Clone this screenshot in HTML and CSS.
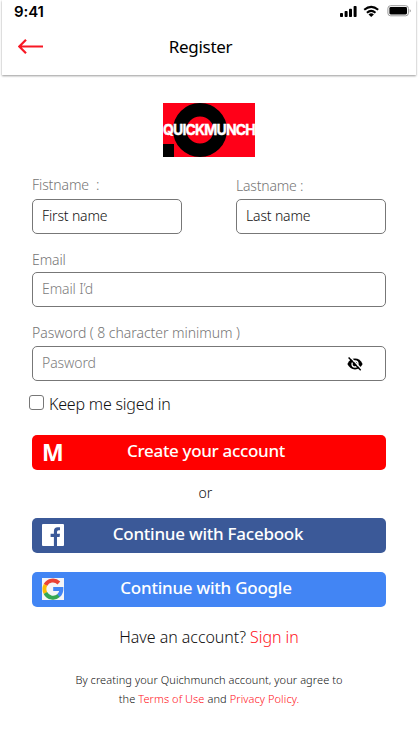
FILE: index.html
```html
<!DOCTYPE html>
<html lang="en">
<head>
<meta charset="utf-8">
<meta name="viewport" content="width=device-width">
<title>Register</title>
<link rel="stylesheet" href="styles.css">
</head>
<body>
<header class="header">
  <div class="status">
    <span class="time">9:41</span>
    <svg class="indicators" width="73" height="14" viewBox="0 0 73 14" aria-hidden="true">
      <rect x="1" y="8" width="3" height="4" rx=".8"/>
      <rect x="5.6" y="6" width="3" height="6" rx=".8"/>
      <rect x="10" y="3.7" width="3" height="8.3" rx=".8"/>
      <rect x="14.6" y="1" width="3" height="11" rx=".8"/>
      <g fill="none" stroke="#000" stroke-width="2"><path d="M25.2 4.8Q32.2-1 39.2 4.8M27.9 7.8Q32.2 4 36.5 7.8"/></g>
      <path d="M29.5 9.4Q32.2 7.3 34.9 9.4L32.2 12Z"/>
      <rect x="48.9" y=".7" width="20.5" height="10.1" rx="2.7" fill="none" stroke="#999"/>
      <rect x="50.4" y="2.1" width="17.6" height="7.3" rx="1.3"/>
      <path d="M70.7 4Q73 5.8 70.7 7.6Z" fill="#999"/>
    </svg>
  </div>
  <div class="nav">
    <svg width="26" height="16" viewBox="0 0 26 16" fill="none" stroke="#f81824" stroke-width="2.2" aria-label="Back"><path d="M25 7.5H1.5M8 .8L1.3 7.5L8 14.2"/></svg>
    <h1 class="title">Register</h1>
  </div>
</header>
<main class="main">
  <svg class="logo" width="92" height="54" viewBox="0 0 92 54" role="img" aria-label="Quickmunch">
    <path fill="#ff0018" d="M0 0H92V54H0Z"/>
    <circle cx="37" cy="27" r="20.3" fill="none" stroke="#000" stroke-width="13.4"/>
    <path d="M0 41H11V54H0Z"/>
    <text x="0" y="32.2" textLength="92" lengthAdjust="spacingAndGlyphs" class="wordmark">QUICKMUNCH</text>
  </svg>
  <form class="form">
    <div class="names">
      <div class="field"><label class="label first-label" for="first">Fistname&nbsp; :</label><input class="input dark first" id="first" value="First name"></div>
      <div class="field"><label class="label last-label" for="last">Lastname :</label><input class="input dark last" id="last" value="Last name"></div>
    </div>
    <div class="field"><label class="label email-label" for="email">Email</label><input class="input email" id="email" placeholder="Email I’d"></div>
    <div class="field"><label class="label pass-label" for="pass">Pasword ( 8 character minimum )</label>
      <div class="input password"><input class="bare" id="pass" placeholder="Pasword">
        <svg width="16" height="14" viewBox="0 0 16 14" aria-hidden="true"><path d="M.4 7Q3 1.6 8 1.6T15.6 7Q13 12.4 8 12.4T.4 7Z"/><circle cx="8" cy="7" r="3" fill="none" stroke="#fff" stroke-width="1.3"/><path d="M2.9-.2L14.8 12.2" stroke="#fff" stroke-width="1.4"/><path d="M1.6.6L13.7 13.3" stroke="#000" stroke-width="1.4"/></svg>
      </div>
    </div>
    <label class="remember"><input class="check" type="checkbox"><span>Keep me siged in</span></label>
    <button type="button" class="button create"><span class="mark m">M</span><span class="caption create-text">Create your account</span></button>
    <p class="or">or</p>
    <button type="button" class="button facebook">
      <svg class="mark" width="22" height="22" viewBox="0 0 22 22" aria-hidden="true"><rect width="22" height="22" rx="1" fill="#fff"/><path fill="#3b5998" d="M11.9 22V13H8.6V9.7H11.9V7.3Q11.9 3.3 15.7 3.3H18V6.3H16.6Q15 6.3 15 8V9.7H18L17.6 13H15V22Z"/></svg>
      <span class="caption facebook-text">Continue with Facebook</span></button>
    <button type="button" class="button google">
      <svg class="mark" width="22" height="22" viewBox="0 0 22 22" aria-hidden="true"><path fill="#f4f5f7" d="M0 0H22V22H0Z"/><g fill="none" stroke-width="3.9"><path stroke="#ea4335" d="M3.4 7A8.6 8.6 0 0 1 16.9 5"/><path stroke="#fbbc05" d="M3.5 6.9A8.6 8.6 0 0 0 3.5 15.1"/><path stroke="#34a853" d="M3.4 15A8.6 8.6 0 0 0 16.9 17.4"/><path stroke="#4285f4" d="M11.2 11H19.4A8.6 8.6 0 0 1 16.5 17.6"/></g></svg>
      <span class="caption google-text">Continue with Google</span></button>
  </form>
  <p class="signin">Have an account? <a>Sign in</a></p>
  <p class="terms"><span class="line">By creating your Quichmunch account, your agree to</span><span class="line second">the <a>Terms of Use</a> and <a>Privacy Policy.</a></span></p>
</main>
</body>
</html>
```
FILE: styles.css
```css
* { box-sizing: border-box; }
body { margin: 0; background: #fff; color: #111; font-family: "Noto Sans", sans-serif; font-weight: 300; height: 736px; overflow: hidden; }
h1, p { margin: 0; font-weight: 300; }
a { color: #ff1018; }
.header { height: 75px; margin: 0 2px; box-shadow: 0 1px 2px rgba(0,0,0,.4); }
.status { height: 24px; padding: 5px 4px 0 12px; display: flex; justify-content: space-between; align-items: flex-start; }
.time { font: 600 15px/14px Inter, sans-serif; letter-spacing: -.1px; color: #000; }
.nav { display: grid; grid-template-columns: 1fr auto 1fr; align-items: center; padding: 0 33px 0 16px; height: 46px; }
.title { font-size: 17px; font-weight: 400; line-height: 24px; letter-spacing: -.3px; color: #000; }
.main { padding: 28px 32px 0; }
.logo { display: block; margin: 0 auto; overflow: visible; }
.wordmark { font: 700 15px Inter, sans-serif; letter-spacing: -.9px; fill: #fff; stroke: #fff; stroke-width: .4px; }
.form { margin-top: 17px; }
.names { display: flex; justify-content: space-between; }
.names .field { width: 150px; }
.field { display: flex; flex-direction: column; }
.field + .field { margin-top: 14px; }
.names .field + .field { margin-top: 0; }
.names + .field { margin-top: 14px; }
.label { height: 24px; line-height: 23px; font-size: 14px; color: #757575; letter-spacing: -.1px; white-space: pre; }
.names .label { height: 25px; line-height: 22px; }
.pass-label { height: 25px; line-height: 24px; letter-spacing: -.04px; }
.names .last-label { padding-top: 1px; letter-spacing: -.2px; }
.input { width: 100%; height: 35px; border: 1px solid #777; border-radius: 5px; background: #fff; padding: 0 9px 2px; font: 300 14px "Noto Sans", sans-serif; letter-spacing: -.1px; color: #777; outline: 0; }
.input.dark { color: #111; font-weight: 350; letter-spacing: -.15px; }
.input::placeholder, .bare::placeholder { color: #7d7d7d; opacity: 1; }
.password { display: flex; align-items: center; justify-content: space-between; padding-right: 22px; padding-bottom: 0; }
.bare { border: 0; padding: 0 0 2px; width: 200px; font: inherit; letter-spacing: inherit; outline: 0; }
.remember { display: flex; align-items: center; height: 22px; margin: 12px 0 0 -3px; gap: 5px; font-size: 16px; letter-spacing: -.2px; }
.check { appearance: none; width: 15px; height: 15px; margin: 0; border: 1px solid #777; border-radius: 3px; position: relative; top: -2px; }
.button { display: grid; grid-template-columns: 1fr auto 1fr; align-items: center; width: 100%; height: 35px; border: 0; border-radius: 5px; padding: 0 10px 1px; color: #fff; font: 500 17px "Noto Sans", sans-serif; }
.create { background: #f00; margin-top: 20px; padding-right: 16px; letter-spacing: -.33px; }
.facebook { background: #3b5998; letter-spacing: -.25px; padding-right: 12px; }
.google { background: #4285f4; margin-top: 19px; padding-right: 16px; letter-spacing: -.25px; }
.m { font: 700 23px/26px "Open Sans", sans-serif; text-align: left; letter-spacing: 0; }
.caption { line-height: 32px; padding-bottom: 2px; white-space: nowrap; }
.or { text-align: center; height: 48px; line-height: 46px; font-size: 14px; padding-right: 7px; }
.signin { text-align: center; margin-top: 18px; line-height: 24px; font-size: 16px; letter-spacing: -.05px; }
.terms { margin-top: 21px; font-size: 11px; font-weight: 350; line-height: 19px; text-align: center; letter-spacing: .08px; }
.line { display: block; white-space: nowrap; }
```
